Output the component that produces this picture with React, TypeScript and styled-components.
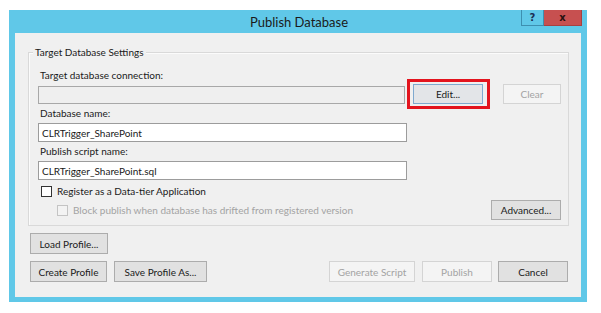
import React from "react";
import styled, { createGlobalStyle } from "styled-components";

const Global = createGlobalStyle`
  html, body { margin: 0; padding: 0; background: #ffffff; }
  body { font-family: "Lato", "Noto Sans", sans-serif; }
`;

const Win = styled.div`
  margin: 10px 0 0 9px;
  width: 578px;
  height: 292px;
  box-sizing: border-box;
  background: #60c8e8;
  padding: 0 6px 5px 6px;
  display: flex;
  flex-direction: column;
`;

const TitleBar = styled.div`
  height: 23px;
  position: relative;
  display: flex;
  justify-content: center;
  align-items: center;
`;

const Title = styled.div`
  font-size: 13px;
  color: #1a1a1a;
  padding-left: 2px;
`;

const Caption = styled.div`
  position: absolute;
  right: -1px;
  top: 0;
  display: flex;
`;

const CapBtn = styled.div<{ $close?: boolean }>`
  height: 16px;
  width: ${(p) => (p.$close ? 38 : 23)}px;
  box-sizing: border-box;
  background: ${(p) => (p.$close ? "#c75050" : "#60c8e8")};
  border: 1px solid ${(p) => (p.$close ? "#a84040" : "#3d8fb0")};
  border-top: none;
  ${(p) => (p.$close ? "border-left: none;" : "")}
  display: flex;
  align-items: center;
  justify-content: center;
  font-family: "DejaVu Sans", sans-serif;
  font-weight: bold;
  font-size: 10px;
  color: ${(p) => (p.$close ? "#2a1010" : "#1b2f55")};
`;

const Client = styled.div`
  flex: 1;
  background: #f0f0f0;
  padding: 19px 12px 0 13px;
  display: flex;
  flex-direction: column;
  font-size: 10px;
  color: #1a1a1a;
`;

const Group = styled.div`
  position: relative;
  border: 1px solid #d9d9d9;
  box-shadow: inset 1px 1px 0 #fbfbfb;
  padding: 15px 7px 5px 9px;
  display: flex;
  flex-direction: column;
`;

const Legend = styled.span`
  position: absolute;
  top: -8px;
  left: 4px;
  padding: 0 2px;
  line-height: 14px;
  background: #f0f0f0;
`;

const Label = styled.div<{ $mt?: number }>`
  line-height: 14px;
  padding-left: 2px;
  margin-top: ${(p) => p.$mt ?? 0}px;
`;

const Row = styled.div<{ $mt?: number }>`
  display: flex;
  align-items: flex-end;
  margin-top: ${(p) => p.$mt ?? 0}px;
`;

const TextBox = styled.div<{ $w: number; $h?: number; $disabled?: boolean }>`
  width: ${(p) => p.$w}px;
  height: ${(p) => p.$h ?? 19}px;
  box-sizing: border-box;
  border: 1px solid ${(p) => (p.$disabled ? "#a8a8a8" : "#9c9c9c")};
  background: ${(p) => (p.$disabled ? "#efefef" : "#ffffff")};
  padding-left: 3px;
  display: flex;
  align-items: center;
  line-height: 14px;
`;

const Button = styled.div<{ $w: number; $h?: number; $disabled?: boolean; $focus?: boolean; $ml?: number }>`
  position: relative;
  width: ${(p) => p.$w}px;
  height: ${(p) => p.$h ?? 21}px;
  margin-left: ${(p) => p.$ml ?? 0}px;
  box-sizing: border-box;
  flex: none;
  display: flex;
  align-items: center;
  justify-content: center;
  background: ${(p) => (p.$disabled ? "#f4f4f4" : p.$focus ? "#e3e5e8" : "#e1e1e1")};
  border: 1px solid ${(p) => (p.$disabled ? "#d4d4d4" : p.$focus ? "#7fa9cf" : "#acacac")};
  color: ${(p) => (p.$disabled ? "#a3a3a3" : "#1a1a1a")};
`;

const Highlight = styled.div`
  position: absolute;
  left: -7px;
  right: -8px;
  top: -6px;
  bottom: -6px;
  border: 3px solid #e3141e;
  box-sizing: border-box;
  pointer-events: none;
`;

const CheckRow = styled.div<{ $mt?: number; $ml: number; $disabled?: boolean }>`
  display: flex;
  align-items: center;
  margin-top: ${(p) => p.$mt ?? 0}px;
  margin-left: ${(p) => p.$ml}px;
  line-height: 14px;
  color: ${(p) => (p.$disabled ? "#a3a3a3" : "#1a1a1a")};
`;

const Box = styled.span<{ $disabled?: boolean }>`
  width: 11px;
  height: 11px;
  box-sizing: border-box;
  border: 1px solid ${(p) => (p.$disabled ? "#c4c4c4" : "#333333")};
  background: ${(p) => (p.$disabled ? "#f3f3f3" : "#ffffff")};
  margin-right: 5px;
`;

const LastRow = styled.div`
  display: flex;
  align-items: center;
  justify-content: space-between;
  margin-top: 2px;
  height: 20px;
`;

const Footer = styled.div`
  display: flex;
  flex-direction: column;
  padding-left: 2px;
  margin-top: 7px;
`;

const FooterRow = styled.div`
  display: flex;
  align-items: center;
  margin-top: 7px;
`;

const Spacer = styled.div`
  flex: 1;
`;

const EndGap = styled.div`
  width: 1px;
`;

export default function App() {
  return (
    <>
      <Global />
      <Win>
        <TitleBar>
          <Title>Publish Database</Title>
          <Caption>
            <CapBtn>?</CapBtn>
            <CapBtn $close>x</CapBtn>
          </Caption>
        </TitleBar>
        <Client>
          <Group>
            <Legend>Target Database Settings</Legend>
            <Label>Target database connection:</Label>
            <Row $mt={2}>
              <TextBox $w={367} $h={18} $disabled />
              <Button $w={70} $h={20} $focus $ml={8}>
                Edit...
                <Highlight />
              </Button>
              <Button $w={58} $h={20} $disabled $ml={20}>
                Clear
              </Button>
            </Row>
            <Label $mt={2}>Database name:</Label>
            <Row $mt={3}>
              <TextBox $w={369}>CLRTrigger_SharePoint</TextBox>
            </Row>
            <Label $mt={2}>Publish script name:</Label>
            <Row $mt={3}>
              <TextBox $w={369}>CLRTrigger_SharePoint.sql</TextBox>
            </Row>
            <CheckRow $mt={4} $ml={3}>
              <Box />
              Register as a Data-tier Application
            </CheckRow>
            <LastRow>
              <CheckRow $ml={19} $disabled>
                <Box $disabled />
                Block publish when database has drifted from registered version
              </CheckRow>
              <Button $w={70} $h={20}>
                Advanced...
              </Button>
            </LastRow>
          </Group>
          <Footer>
            <Button $w={78}>Load Profile...</Button>
            <FooterRow>
              <Button $w={77}>Create Profile</Button>
              <Button $w={93} $ml={7}>
                Save Profile As...
              </Button>
              <Spacer />
              <Button $w={86} $disabled>
                Generate Script
              </Button>
              <Button $w={70} $ml={7} $disabled>
                Publish
              </Button>
              <Button $w={70} $ml={6}>
                Cancel
              </Button>
              <EndGap />
            </FooterRow>
          </Footer>
        </Client>
      </Win>
    </>
  );
}
